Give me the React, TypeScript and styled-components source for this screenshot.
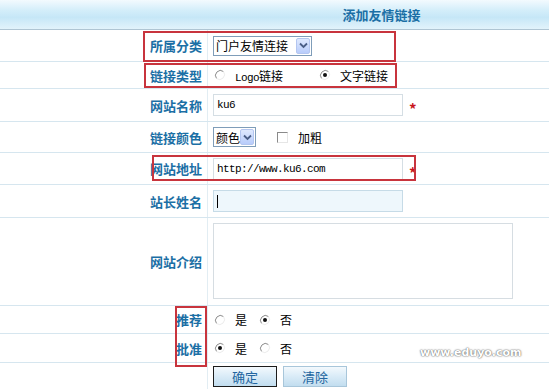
import styled, { createGlobalStyle } from 'styled-components'

const GlobalStyle = createGlobalStyle`
  html, body { margin: 0; padding: 0; background: #fff; }
  body {
    font-family: "Noto Sans CJK SC", "Liberation Sans", sans-serif;
    font-size: 12px;
    color: #000;
  }
`

const Page = styled.div`
  position: relative;
  width: 549px;
  height: 389px;
  overflow: hidden;
  background: #fff;
`

const Header = styled.div`
  display: grid;
  grid-template-columns: 208px 1fr;
  height: 29px;
  border-bottom: 1px solid #afc5d3;
  background: linear-gradient(#f3fafe 0%, #d4eefa 35%, #c6e7f7 60%, #e2f3fb 100%);
`

const Title = styled.div`
  grid-column: 2;
  display: flex;
  align-items: center;
  justify-content: center;
  padding-left: 6px;
  font-size: 13px;
  font-weight: bold;
  color: #1b6fa5;
`

const Row = styled.div<{ $h: number }>`
  display: grid;
  grid-template-columns: 208px 1fr;
  height: ${(p) => p.$h}px;
  border-bottom: 1px solid #d6e6ef;
`

const LastRow = styled(Row)`
  border-bottom: none;
`

const Label = styled.div`
  display: flex;
  align-items: center;
  justify-content: flex-end;
  padding-right: 5px;
  border-right: 1px solid #e2edf3;
  font-size: 13px;
  font-weight: bold;
  color: #1b6fa5;
`

const Field = styled.div<{ $gap?: number; $top?: boolean }>`
  display: flex;
  align-items: ${(p) => (p.$top ? 'flex-start' : 'center')};
  gap: ${(p) => p.$gap ?? 0}px;
  padding-left: 5px;
  padding-top: ${(p) => (p.$top ? 5 : 0)}px;
  white-space: nowrap;
`

const Select = styled.div<{ $w: number }>`
  display: flex;
  align-items: center;
  justify-content: space-between;
  box-sizing: border-box;
  width: ${(p) => p.$w}px;
  height: 20px;
  padding: 0 1px 0 2px;
  border: 1px solid #7f9db9;
  background: #fff;
  font-size: 12px;
  white-space: nowrap;
`

const SelectArrow = styled.span`
  display: flex;
  flex: none;
  align-items: center;
  justify-content: center;
  box-sizing: border-box;
  width: 14px;
  height: 16px;
  border: 1px solid #b4c6f0;
  border-radius: 2px;
  background: linear-gradient(#dfe9fe, #b8ccfb);
`

const TextBox = styled.div<{ $focus?: boolean }>`
  display: flex;
  align-items: center;
  box-sizing: border-box;
  width: 190px;
  height: 22px;
  padding-left: 3px;
  border: 1px solid ${(p) => (p.$focus ? '#c6dbe7' : '#d5dee4')};
  background: ${(p) => (p.$focus ? '#eef7fc' : '#fff')};
`

const Caret = styled.span`
  width: 1px;
  height: 13px;
  background: #000;
`

const Latin = styled.span`
  font-family: "Liberation Mono", monospace;
  font-size: 11px;
  letter-spacing: -0.6px;
`

const Required = styled.span`
  margin-left: 6px;
  margin-top: 7px;
  color: #c8161d;
  font-size: 15px;
  font-weight: bold;
`

const TextArea = styled.div`
  box-sizing: border-box;
  width: 300px;
  height: 76px;
  border: 1px solid #d6dde2;
  background: #fff;
`

const Option = styled.label<{ $gap: number }>`
  display: flex;
  align-items: center;
  gap: ${(p) => p.$gap}px;
  font-size: 12px;
`

const Options = styled.div<{ $gap: number }>`
  display: flex;
  align-items: center;
  gap: ${(p) => p.$gap}px;
  padding-left: 1px;
`

const CheckBox = styled.span`
  box-sizing: border-box;
  width: 11px;
  height: 11px;
  margin-left: 21px;
  margin-right: 10px;
  border-top: 1px solid #8a8a8a;
  border-left: 1px solid #8a8a8a;
  border-right: 1px solid #e6e6e6;
  border-bottom: 1px solid #e6e6e6;
  background: #fff;
`

const Button = styled.span<{ $focused?: boolean }>`
  display: flex;
  align-items: center;
  justify-content: center;
  box-sizing: border-box;
  width: 64px;
  height: 21px;
  border: 1px solid ${(p) => (p.$focused ? '#1c1c1c' : '#a8c6da')};
  background: linear-gradient(#f3f9fd, #d9ebf7 50%, #c2ddef);
  color: #2366a0;
  font-size: 13px;
`

const Mark = styled.div<{ $x: number; $y: number; $w: number; $h: number }>`
  position: absolute;
  left: ${(p) => p.$x}px;
  top: ${(p) => p.$y}px;
  width: ${(p) => p.$w}px;
  height: ${(p) => p.$h}px;
  box-sizing: border-box;
  border: 2px solid #c8343d;
  pointer-events: none;
`

const Watermark = styled.div`
  position: absolute;
  left: 420px;
  top: 346px;
  font-family: "DejaVu Sans", sans-serif;
  font-size: 11px;
  font-weight: bold;
  color: #fff;
  text-shadow: 0 0 2px #6c6c6c, 0 0 1px #5a5a5a;
`

const Chevron = () => (
  <svg width="9" height="7" viewBox="0 0 9 7">
    <path d="M1 1.5 L4.5 5 L8 1.5" stroke="#4a5e86" strokeWidth="1.8" fill="none" />
  </svg>
)

const Radio = ({ checked }: { checked?: boolean }) => (
  <svg width="12" height="12" viewBox="0 0 12 12">
    <circle cx="6" cy="6" r="5" fill="#fff" />
    <path d="M9.5 2.5 A5 5 0 0 0 2.5 9.5" stroke="#8c8c8c" fill="none" />
    <path d="M2.5 9.5 A5 5 0 0 0 9.5 2.5" stroke="#ececec" fill="none" />
    {checked && <circle cx="6" cy="6" r="2" fill="#111" />}
  </svg>
)

const Choice = (props: { checked?: boolean; gap: number; children: React.ReactNode }) => (
  <Option $gap={props.gap}>
    <Radio checked={props.checked} />
    <span>{props.children}</span>
  </Option>
)

export default function App() {
  return (
    <Page>
      <GlobalStyle />
      <Header>
        <Title>添加友情链接</Title>
      </Header>

      <Row $h={31}>
        <Label>所属分类</Label>
        <Field>
          <Select $w={99}>
            门户友情连接
            <SelectArrow>
              <Chevron />
            </SelectArrow>
          </Select>
        </Field>
      </Row>

      <Row $h={26}>
        <Label>链接类型</Label>
        <Field>
          <Options $gap={36}>
            <Choice gap={9}>
              <Latin>Logo</Latin>链接
            </Choice>
            <Choice gap={9} checked>
              文字链接
            </Choice>
          </Options>
        </Field>
      </Row>

      <Row $h={32}>
        <Label>网站名称</Label>
        <Field>
          <TextBox>
            <Latin>ku6</Latin>
          </TextBox>
          <Required>*</Required>
        </Field>
      </Row>

      <Row $h={30}>
        <Label>链接颜色</Label>
        <Field>
          <Select $w={43}>
            颜色
            <SelectArrow>
              <Chevron />
            </SelectArrow>
          </Select>
          <CheckBox />
          加粗
        </Field>
      </Row>

      <Row $h={31}>
        <Label>网站地址</Label>
        <Field>
          <TextBox>
            <Latin>http://www.ku6.com</Latin>
          </TextBox>
          <Required>*</Required>
        </Field>
      </Row>

      <Row $h={32}>
        <Label>站长姓名</Label>
        <Field>
          <TextBox $focus>
            <Caret />
          </TextBox>
        </Field>
      </Row>

      <Row $h={87}>
        <Label>网站介绍</Label>
        <Field $top>
          <TextArea />
        </Field>
      </Row>

      <Row $h={27}>
        <Label>推荐</Label>
        <Field>
          <Options $gap={12}>
            <Choice gap={9}>是</Choice>
            <Choice gap={9} checked>
              否
            </Choice>
          </Options>
        </Field>
      </Row>

      <Row $h={28}>
        <Label>批准</Label>
        <Field>
          <Options $gap={12}>
            <Choice gap={9} checked>
              是
            </Choice>
            <Choice gap={9}>否</Choice>
          </Options>
        </Field>
      </Row>

      <LastRow $h={26}>
        <Label />
        <Field $gap={6}>
          <Button $focused>确定</Button>
          <Button>清除</Button>
        </Field>
      </LastRow>

      <Mark $x={143} $y={31} $w={253} $h={31} />
      <Mark $x={144} $y={63} $w={253} $h={25} />
      <Mark $x={152} $y={155} $w={264} $h={26} />
      <Mark $x={175} $y={306} $w={32} $h={61} />

      <Watermark>www.eduyo.com</Watermark>
    </Page>
  )
}
